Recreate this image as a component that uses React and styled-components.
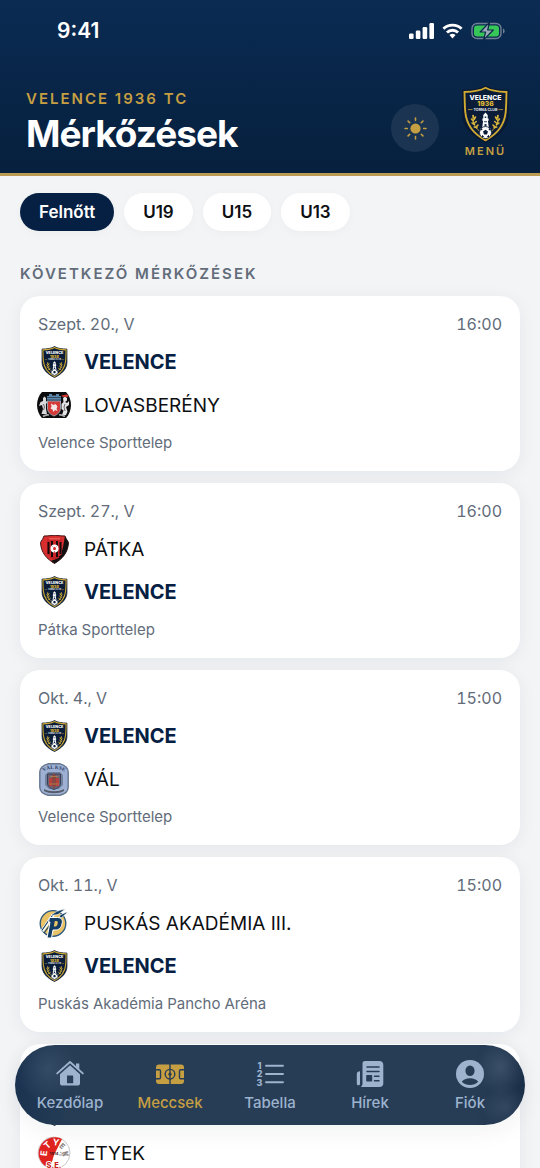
import React, { useState } from 'react';
import styled, { createGlobalStyle, ThemeProvider } from 'styled-components';

const theme = {
    bg:"#f2f4f6",
    card:"#ffffff",
    navy:"#052043",
    gold:"#c69f42",
    text:"#0d0f12",
    muted:"#626c7a",
    tabIcon:"#9db3ce"
};

const GlobalStyle = createGlobalStyle`
  * {
    box-sizing: border-box;
  }
  body {
    margin: 0;
    background: ${theme.bg};
    font-family: Inter, "Liberation Sans", sans-serif;
    -webkit-font-smoothing: antialiased;
  }
  button {
    font-family: inherit;
    border: none;
    cursor: pointer;
  }
`;

const Screen = styled.div`
  height: 100vh;
  display: flex;
  flex-direction: column;
  position: relative;
  overflow: hidden;
`;

const Header = styled.header`
  flex: none;
  background: linear-gradient(#0b2b53, #06203d);
  border-bottom: 3px solid #bb9a52;
`;

const StatusBar = styled.div`
  display: flex;
  align-items: center;
  justify-content: space-between;
  padding: 18px 34px 0 57px;
  color: #fff;
`;

const Clock = styled.span`
  font-size: 21px;
  line-height: 26px;
  font-weight: 600;
`;

const StatusIcons = styled.div`
  display: flex;
  align-items: center;
  gap: 8px;
`;

const TitleBar = styled.div`
  display: flex;
  align-items: flex-end;
  padding: 41px 30px 14px 26px;
`;

const TitleGroup = styled.div`
  flex: 1;
`;

const Eyebrow = styled.p`
  margin: 0;
  font-size: 15px;
  line-height: 20px;
  font-weight: 600;
  letter-spacing: 2px;
  color: ${props => props.theme.gold};
`;

const Title = styled.h1`
  margin: 0;
  font-size: 37px;
  line-height: 50px;
  font-weight: 700;
  letter-spacing: -1px;
  color: #fff;
`;

const ThemeButton = styled.button`
  display: flex;
  align-items: center;
  justify-content: center;
  width: 48px;
  height: 48px;
  padding: 0;
  margin: 0 22px 7px 0;
  border-radius: 50%;
  background: #1b3451;
`;

const MenuButton = styled.button`
  display: flex;
  flex-direction: column;
  align-items: center;
  gap: 1px;
  padding: 0;
  background: none;
  color: ${props => props.theme.gold};
  font-size: 11px;
  line-height: 15px;
  font-weight: 600;
  letter-spacing: 2px;
`;

const Content = styled.main`
  flex: 1;
  min-height: 0;
  overflow-y: auto;
  scrollbar-width: none;
  padding: 17px 20px 0;
`;

const Filters = styled.div`
  display: flex;
  gap: 10px;
`;

const FilterButton = styled.button`
  height: 38px;
  padding: 0 19px;
  border-radius: 19px;
  font-size: 17px;
  font-weight: 600;
  color: ${props => props.$active ? "#fff" : props.theme.text};
  background: ${props => props.$active ? props.theme.navy : props.theme.card};
  box-shadow: 0 2px 8px rgba(20, 30, 45, 0.03);
`;

const SectionTitle = styled.h2`
  margin: 33px 0 12px;
  font-size: 15px;
  line-height: 20px;
  font-weight: 600;
  letter-spacing: 2px;
  color: ${props => props.theme.muted};
`;

const MatchList = styled.div`
  display: flex;
  flex-direction: column;
  gap: 12px;
  padding-bottom: 140px;
`;

const Card = styled.article`
  display: flex;
  flex-direction: column;
  gap: 11px;
  padding: 17px 18px;
  border-radius: 20px;
  background: ${props => props.theme.card};
  box-shadow: 0 3px 18px rgba(20, 30, 45, 0.06);
`;

const Meta = styled.div`
  display: flex;
  justify-content: space-between;
  font-size: ${props => props.$small ? "15px" : "16px"};
  line-height: 22px;
  font-variant-numeric: tabular-nums;
  color: ${props => props.theme.muted};
`;

const Team = styled.div`
  display: flex;
  align-items: center;
  gap: 14px;
  height: 32px;
  font-size: ${props => props.$own ? "20px" : "19px"};
  font-weight: ${props => props.$own ? 700 : 400};
  color: ${props => props.$own ? props.theme.navy : props.theme.text};
`;

const CrestSlot = styled.span`
  display: flex;
  align-items: center;
  justify-content: center;
  width: 32px;
  height: 32px;

  svg {
    flex: none;
  }
`;

const TabBar = styled.nav`
  position: absolute;
  left: 15px;
  right: 15px;
  bottom: 43px;
  display: flex;
  height: 80px;
  padding: 0 5px;
  border-radius: 40px;
  background:
    radial-gradient(ellipse 30px 34px at 32px 24px, rgba(150, 172, 195, 0.16), transparent),
    radial-gradient(ellipse 24px 28px at 486px 22px, rgba(150, 172, 195, 0.22), transparent),
    radial-gradient(ellipse 24px 22px at 490px 62px, rgba(150, 172, 195, 0.16), transparent),
    linear-gradient(90deg, #1b3350, #273d56 60px, #273d56 calc(100% - 50px), #1b2e48);
  box-shadow: 0 6px 24px rgba(20, 30, 45, 0.06);
`;

const Tab = styled.button`
  flex: 1 1 0;
  display: flex;
  flex-direction: column;
  align-items: center;
  gap: 4px;
  padding: 14px 0 0;
  background: none;
  font-size: 15px;
  line-height: 20px;
  font-weight: 500;
  color: ${props => props.$active ? props.theme.gold : props.theme.tabIcon};

  svg {
    display: block;
  }
`;

function SignalIcon() {
  return (
    <svg width="25" height="16" viewBox="0 0 25 16" fill="#fff" aria-hidden="true">
      <rect x="0" y="10.500" width="4.600" height="5.500" rx="1.300"/>
      <rect x="6.800" y="7.500" width="4.600" height="8.500" rx="1.300"/>
      <rect x="13.600" y="4" width="4.600" height="12" rx="1.300"/>
      <rect x="20.400" y="0" width="4.600" height="16" rx="1.300"/>
    </svg>
  );
}

function WifiIcon() {
  return (
    <svg width="21" height="16" viewBox="0 0 22 16" fill="none" stroke="#fff" strokeWidth="3" aria-hidden="true">
      <path d="M1.500 5.700a13.600 13.600 0 0 1 19 0"/>
      <path d="M5.200 9.600a8.300 8.300 0 0 1 11.600 0"/>
      <path d="M7.800 12.300a4.600 4.600 0 0 1 6.400 0L11 15.800z" fill="#fff" stroke="none"/>
    </svg>
  );
}

function BatteryIcon() {
  return (
    <svg width="35" height="20" viewBox="0 0 35 20" aria-hidden="true">
      <rect x="1" y="2.500" width="29" height="15" rx="5" fill="none" stroke="#6f8096" strokeWidth="1.400"/>
      <rect x="3" y="4.500" width="25" height="11" rx="3.200" fill="#37c759"/>
      <path d="M32 7.500c2.200 1 2.200 4 0 5z" fill="#6f8096"/>
      <path d="M18.500 1.300 9.200 11h5.400l-2 7.800L22.300 9h-5.600z" fill="#9aa8b8" stroke="#0a2748" strokeWidth="1.200" strokeLinejoin="round"/>
    </svg>
  );
}

function SunIcon() {
  return (
    <svg width="23" height="23" viewBox="0 0 22 22" stroke={theme.gold} strokeWidth="1.500" strokeLinecap="round" aria-hidden="true">
      <circle cx="11" cy="11" r="4.900" fill={theme.gold} stroke="none"/>
      <path d="M11 1v2.200M11 18.800V21M1 11h2.200M18.800 11H21M3.900 3.900l1.600 1.600M16.500 16.500l1.600 1.600M3.900 18.100l1.600-1.600M16.500 5.500l1.600-1.600"/>
    </svg>
  );
}

const ShieldSvg = styled.svg`
  letter-spacing: normal;
`;

function VelenceCrest({ width, height }) {
  return (
    <ShieldSvg width={width} height={height} viewBox="0.500 0 47 58" aria-hidden="true">
      <path d="M24 1c5 3.600 14 4.500 22.500 4.600V29C46.500 42 37 51 24 57 11 51 1.500 42 1.500 29V5.600C10 5.500 19 4.600 24 1z" fill="#0a1f3d" stroke="#0a1730" strokeWidth="1.500"/>
      <path d="M24 2.800c5.500 3.200 13.500 4 21 4.200-.2 8-.2 14-.8 20C43 40 35 49.500 24 55.300 13 49.500 5 40 3.800 27 3.200 21 3.200 15 3 7c7.500-.2 15.500-1 21-4.200z" fill="#0b1c38" stroke="#d0aa31" strokeWidth="1.900"/>
      <text x="24" y="15" textAnchor="middle" fontSize="6.800" fontWeight="800" fill="#fff">VELENCE</text>
      <text x="24" y="21.400" textAnchor="middle" fontSize="6.800" fontWeight="800" fill="#e0bd35">1936</text>
      <text x="24" y="25.800" textAnchor="middle" fontSize="3.700" fontWeight="700" fill="#e6e9ef">TORNA CLUB</text>
      <path d="M6.500 24.600h4.500M37 24.600h4.500" stroke="#c9a537" strokeWidth=".8"/>
      <path d="M12 30c-1.500 6 .5 12 6 16M36 30c1.500 6-.5 12-6 16" fill="none" stroke="#c9a537" strokeWidth="1"/>
      <path d="M11.500 30.500l.6 2.500M10 34l1.800 2M10.600 38l2.400 1.500M12.800 42l2.600.6M14 32l-1.400 2.500M14.800 36.500l-1.800 1.500M16.500 40l-1.500 1.600M36.500 30.500l-.6 2.500M38 34l-1.800 2M37.400 38L35 39.500M35.200 42l-2.600.6M34 32l1.400 2.500M33.200 36.500l1.800 1.500M31.500 40l1.500 1.600" stroke="#d6b33d" strokeWidth="1.600" strokeLinecap="round"/>
      <path d="M24 27.500l2.200 2.600v3.400h.9v2.300h-.7l1.200 9h-7.200l1.200-9h-.7v-2.300h.9v-3.400z" fill="#fff"/>
      <path d="M23.200 31.500h1.600v1.500h-1.600zM22.600 36.300h2.800v1h-2.800zM23 39h2v2.500h-2z" fill="#17345a"/>
      <circle cx="24" cy="47.500" r="6" fill="#fff" stroke="#0b1c38" strokeWidth=".8"/>
      <path d="M24 44.700l2.500 1.900-1 3h-3l-1-3zM18.600 45.400l1.900-2.700.4 2.300zM29.400 45.400l-1.900-2.700-.4 2.300zM20.300 52l.3-2.300 2.200 2.200zM27.700 52l-.3-2.300-2.200 2.200z" fill="#0b1c38"/>
    </ShieldSvg>
  );
}

function LovasberenyCrest() {
  return (
    <svg width="34" height="26" viewBox="0 0 34 26" aria-hidden="true">
      <path d="M5 0h24c3 3 5 8 5 13s-2 10-5 13H5C2 23 0 18 0 13S2 3 5 0z" fill="#0c0b0d"/>
      <path d="M6 6l1.500-1.500L9 6v3l1.500 1L9 12v5l1 5H4.500L6 17l-1-4-3 1 1.500-4L6 9z" fill="#d9d8da"/>
      <path d="M26 6l2-1.500L30 6v2.500l-2 1.500 2 1 2-2v4l-3 2 1.500 4.500L29 23h-4l1.500-4.500-2-1.500V12l2-2z" fill="#e4e3e5"/>
      <path d="M6.500 12l1 3-1 3M28 12l-1 3 1 4" stroke="#4b474e" strokeWidth=".8" fill="none"/>
      <path d="M24.500 3.500L30 2.200l1.500 1.300-1 1.700-5.500-.5z" fill="#c8352e"/>
      <path d="M10.500 9h13v7c0 4-2.500 6.300-6.500 8-4-1.700-6.500-4-6.500-8z" fill="#d43a37" stroke="#9aa1ad" strokeWidth="1"/>
      <path d="M10 9V4h2V2h3v1.500h4V2h3v2h2v5z" fill="#5b86ab"/>
      <path d="M10 5.500h14M10 8h14" stroke="#303b49" strokeWidth=".8"/>
      <path d="M14 11.500l2.500 1.500 2-1 2 2.500-1 2 1 2.500-2.500-1-1.500 2-1-2.500-2-1 1-1.800z" fill="#f4e6e8"/>
      <path d="M6 24.500c2-1.500 4-2 6-1.500M28 24.500c-2-1.500-4-2-6-1.500" stroke="#a9a9ab" strokeWidth="1.800" fill="none"/>
    </svg>
  );
}

function PatkaCrest() {
  return (
    <svg width="29" height="29" viewBox="0 0 29 29" aria-hidden="true">
      <path d="M4 1C9 1 11 .3 14.500.3S20 1 25 1c1 3 2.500 4.500 3.500 6.500C28 18 22 24 14.500 28.500 7 24 1 18 .5 7.500 1.500 5.500 3 4 4 1z" fill="#d82e2e" stroke="#44191a"/>
      <path d="M25 1c1 3 2.500 4.500 3.500 6.500C28 18 22 24 14.500 28.500L11 26c9-4 11-9 12-14z" fill="#111"/>
      <path d="M7 4h15v15l-7.500 6L7 19z" fill="#c92529"/>
      <path d="M8.500 7v12M12 6v16M17 6v16M20.500 7v12" stroke="#15090a" strokeWidth="2"/>
      <path d="M9 3.800h11" stroke="#eb6a61" strokeWidth="1.200"/>
      <circle cx="14.500" cy="13.500" r="4" fill="#fff"/>
      <path d="M14.500 11.800l1.600 1.200-.6 1.900h-2l-.6-1.900z" fill="#d82e2e"/>
      <path d="M11.500 10.500l1 1M17.500 10.500l-1 1M14.500 16v1.500" stroke="#811719" strokeWidth=".6"/>
      <path d="M10 22c3 2 6 2 9 0" stroke="#b72125" strokeWidth="1.500" fill="none"/>
    </svg>
  );
}

function ValCrest() {
  return (
    <svg width="30" height="33" viewBox="0 0 30 33" aria-hidden="true">
      <path d="M9 .8h12c5 1.500 8.200 4 8.200 8.200v15c0 4.500-3.200 7-8.200 8.200H9C4 31 .8 28.500.8 24V9C.8 4.800 4 2.300 9 .8z" fill="#9eb1d4" stroke="#66768f" strokeWidth="1.400"/>
      <path id="val-arc" d="M3.500 9.500C8 4.500 22 4.500 26.500 9.500" fill="none"/>
      <text fontSize="5" fontWeight="700" fill="#25385c" fontFamily="Liberation Serif, serif">
        <textPath href="#val-arc" startOffset="50%" textAnchor="middle">VÁL KSE</textPath>
      </text>
      <path d="M6 12l3-3h12l3 3v10l-4 4H10l-4-4z" fill="#73819d"/>
      <path d="M8.500 11h13v9c0 3.500-3 5.500-6.500 6.500-3.500-1-6.500-3-6.500-6.500z" fill="#6d6374" stroke="#35405a"/>
      <path d="M10 15h3v8h-3zM17 15h3v8h-3z" fill="#b5403d"/>
      <path d="M13 13l2-3 2 3v10l-2 2-2-2z" fill="#8a4640"/>
      <path d="M11 13.500h8M10 21h10" stroke="#b5854a" strokeWidth=".8"/>
      <path d="M5 26c5 3 15 3 20 0v2c-5 3-15 3-20 0z" fill="#555c68"/>
    </svg>
  );
}

function PuskasCrest() {
  return (
    <svg width="30" height="31" viewBox="0 0 30 31" aria-hidden="true">
      <circle cx="14" cy="15.500" r="12.800" fill="#e8c366" stroke="#2b587e" strokeWidth="1.300"/>
      <path d="M3 23L14.500 6.500" stroke="#fff" strokeWidth="3.200"/>
      <path d="M2.800 22.500L14 6.500M5 25l7-9.500" stroke="#164066" strokeWidth="1.200"/>
      <path d="M10.500 9.500h8c4.500 0 5.500 3 4.500 6.500-1 4-3 6-7 6h-2l-1.500 8H8l3-16H9.500z" fill="#123c63" stroke="#fff" strokeWidth="1"/>
      <path d="M15.800 13h1.700c1.300 0 1.500 1 1.200 2.500-.4 2-1 3-2.500 3h-1.400z" fill="#e8c366"/>
      <path d="M12 7.500C17 3 21 2 26.500 1L19 6.500zM20 8c3-2 6-3.500 9-4l-7 6z" fill="#123c63" stroke="#fff" strokeWidth=".6"/>
    </svg>
  );
}

function EtyekCrest() {
  return (
    <svg width="34" height="34" viewBox="0 0 34 34" aria-hidden="true">
      <circle cx="17" cy="17" r="16" fill="#fff" stroke="#bdb9b8" strokeWidth=".8"/>
      <path d="M25 3A16 16 0 1 0 13 32.500L17 19z" fill="#e0231f"/>
      <g fontSize="9" fontWeight="700" fill="#fff" textAnchor="middle">
        <text transform="translate(10 17.500) rotate(-85)">E</text>
        <text transform="translate(12.500 11.500) rotate(-42)">T</text>
        <text transform="translate(18.500 9.500) rotate(8)">Y</text>
      </g>
      <g fontSize="7" fill="#fff" stroke="#77716e" strokeWidth=".5" textAnchor="middle">
        <text transform="translate(23.500 12) rotate(42)">E</text>
        <text transform="translate(26 18) rotate(82)">K</text>
      </g>
      <text x="17" y="18.500" textAnchor="middle" fontSize="4" fontWeight="700" fill="#3d1514">1914</text>
      <path d="M22 19h9M23 16l3 2 4-2" stroke="#8b807c" strokeWidth=".8" fill="none"/>
      <text x="17" y="31.500" textAnchor="middle" fontSize="7.500" fontWeight="800" fill="#c81f20" stroke="#fff" strokeWidth="2" paintOrder="stroke">S.E.</text>
    </svg>
  );
}

function HomeIcon() {
  return (
    <svg width="30" height="30" viewBox="0 0 30 30" fill="currentColor" aria-hidden="true">
      <path d="M15 6.300l-10 9V24.500c0 1.300.8 2 2 2h16c1.200 0 2-.7 2-2V15.300zM12 16.500h5.500c.4 0 .7.300.7.700v7H12z" fillRule="evenodd"/>
      <path d="M2.200 14.400L15 3l12.800 11.400" fill="none" stroke="currentColor" strokeWidth="1.900" strokeLinecap="round" strokeLinejoin="round"/>
      <path d="M21 4.500h3.300v6l-3.300-3z"/>
    </svg>
  );
}

function PitchIcon() {
  return (
    <svg width="30" height="30" viewBox="0 0 30 30" aria-hidden="true">
      <rect x="1" y="5.500" width="28" height="19.500" rx="3" fill="currentColor"/>
      <g fill="none" stroke="#273d56" strokeWidth="1.400">
        <path d="M15 5v20.500M1 10.800h3.300c.8 0 1.200.4 1.200 1.200v6.500c0 .8-.4 1.200-1.200 1.200H1M29 10.800h-3.300c-.8 0-1.200.4-1.200 1.200v6.500c0 .8.400 1.200 1.200 1.200H29"/>
        <circle cx="15" cy="15.200" r="4.800"/>
      </g>
      <circle cx="15" cy="15.200" r="1.600" fill="#273d56"/>
    </svg>
  );
}

function TableIcon() {
  return (
    <svg width="30" height="30" viewBox="0 0 30 30" aria-hidden="true">
      <g fill="currentColor" fontSize="9" fontWeight="800" textAnchor="middle">
        <text x="4.500" y="9.500">1</text>
        <text x="4.500" y="18.200">2</text>
        <text x="4.500" y="27">3</text>
      </g>
      <path d="M11 6.700h17M11 15h17M11 23.300h17" stroke="currentColor" strokeWidth="1.900" strokeLinecap="round"/>
    </svg>
  );
}

function NewsIcon() {
  return (
    <svg width="30" height="30" viewBox="0 0 30 30" aria-hidden="true">
      <path d="M10 2h14.500c2.300 0 3.800 1.500 3.800 3.800v18.400c0 2.500-1.300 3.800-3.800 3.800H5.800c1.200-.9 1.700-2 1.700-3.500V4.800C7.500 3 8.300 2 10 2z" fill="currentColor"/>
      <path d="M5 12.200c-1.900 0-3.200.9-3.200 2.600v9.400c0 1.300.6 2.100 1.700 2.100s1.500-.8 1.500-2.100z" fill="currentColor"/>
      <g stroke="#273d56" strokeWidth="1.500" strokeLinecap="round">
        <path d="M12 8h12M12 12.500h12M19.500 17.200H24M19.500 21.700H24"/>
      </g>
      <rect x="11.200" y="16" width="6" height="6.500" rx=".8" fill="#273d56"/>
    </svg>
  );
}

function AccountIcon() {
  return (
    <svg width="30" height="30" viewBox="0 0 30 30" aria-hidden="true">
      <circle cx="15" cy="15" r="14" fill="currentColor"/>
      <ellipse cx="15" cy="11.800" rx="4.600" ry="5.200" fill="#273d56"/>
      <path d="M6.800 22.800c1.500-2.200 4.600-3.500 8.200-3.500s6.700 1.300 8.200 3.500c-2.300 2.200-5 3.200-8.200 3.200s-5.900-1-8.200-3.200z" fill="#273d56"/>
    </svg>
  );
}

const crests = {
    "LOVASBERÉNY": LovasberenyCrest,
    "PÁTKA": PatkaCrest,
    "VÁL": ValCrest,
    "PUSKÁS AKADÉMIA III.": PuskasCrest,
    "ETYEK": EtyekCrest
};

const matches = [
    { date:"Szept. 20., V", time:"16:00", home:"VELENCE", away:"LOVASBERÉNY", venue:"Velence Sporttelep" },
    { date:"Szept. 27., V", time:"16:00", home:"PÁTKA", away:"VELENCE", venue:"Pátka Sporttelep" },
    { date:"Okt. 4., V", time:"15:00", home:"VELENCE", away:"VÁL", venue:"Velence Sporttelep" },
    { date:"Okt. 11., V", time:"15:00", home:"PUSKÁS AKADÉMIA III.", away:"VELENCE", venue:"Puskás Akadémia Pancho Aréna" },
    { date:"Okt. 18., V", time:"15:00", home:"VELENCE", away:"ETYEK", venue:"Velence Sporttelep" }
];

const groups = ["Felnőtt", "U19", "U15", "U13"];

const tabs = [
    { label:"Kezdőlap", Icon:HomeIcon },
    { label:"Meccsek", Icon:PitchIcon },
    { label:"Tabella", Icon:TableIcon },
    { label:"Hírek", Icon:NewsIcon },
    { label:"Fiók", Icon:AccountIcon }
];

function TeamRow({ name }) {
  const own = name === "VELENCE";
  const Crest = crests[name];

  return (
    <Team $own={own}>
      <CrestSlot>
        {own ? <VelenceCrest width={27} height={32}/> : <Crest/>}
      </CrestSlot>
      <span>{name}</span>
    </Team>
  );
}

function MatchCard({ match }) {
  return (
    <Card>
      <Meta>
        <span>{match.date}</span>
        <time>{match.time}</time>
      </Meta>
      <TeamRow name={match.home}/>
      <TeamRow name={match.away}/>
      <Meta $small>{match.venue}</Meta>
    </Card>
  );
}

function App() {

  const [group, setGroup] = useState("Felnőtt");
  const [tab, setTab] = useState("Meccsek");

  return (
    <ThemeProvider theme={theme}>
      <GlobalStyle/>
      <Screen>
        <Header>
          <StatusBar>
            <Clock>9:41</Clock>
            <StatusIcons>
              <SignalIcon/>
              <WifiIcon/>
              <BatteryIcon/>
            </StatusIcons>
          </StatusBar>
          <TitleBar>
            <TitleGroup>
              <Eyebrow>VELENCE 1936 TC</Eyebrow>
              <Title>Mérkőzések</Title>
            </TitleGroup>
            <ThemeButton aria-label="Téma">
              <SunIcon/>
            </ThemeButton>
            <MenuButton>
              <VelenceCrest width={49} height={58}/>
              MENÜ
            </MenuButton>
          </TitleBar>
        </Header>
        <Content>
          <Filters>
            {groups.map(name => (
              <FilterButton key={name} $active={name === group} onClick={() => setGroup(name)}>{name}</FilterButton>
            ))}
          </Filters>
          <SectionTitle>KÖVETKEZŐ MÉRKŐZÉSEK</SectionTitle>
          <MatchList>
            {matches.map(match => <MatchCard key={match.date} match={match}/>)}
          </MatchList>
        </Content>
        <TabBar>
          {tabs.map(({ label, Icon }) => (
            <Tab key={label} $active={label === tab} onClick={() => setTab(label)}>
              <Icon/>
              {label}
            </Tab>
          ))}
        </TabBar>
      </Screen>
    </ThemeProvider>
  )
}

export default App
